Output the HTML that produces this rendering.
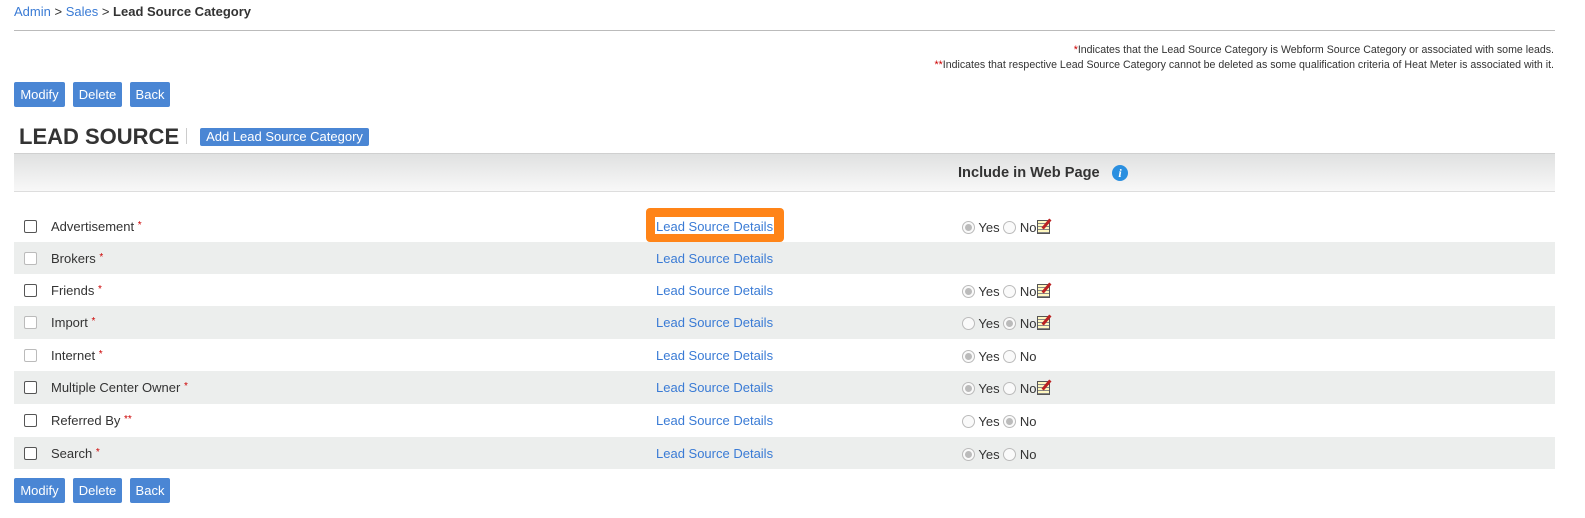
<!DOCTYPE html>
<html><head><style>
body{margin:0;width:1585px;height:518px;background:#fff;font-family:"Liberation Sans",sans-serif;color:#333;position:relative;overflow:hidden}
.a{position:absolute}
.btn{position:absolute;background:#4a86d4;color:#fff;font-size:13px;height:25px;line-height:25px;text-align:center;border-radius:2px}
.row{position:absolute;left:14px;width:1541px}
.g{background:#eceeed}
.cb{position:absolute;left:10px;width:11px;height:11px;border:1px solid #555;border-radius:2px;background:#fff}
.cb.d{border-color:#bbb}
.lbl{position:absolute;left:37px;font-size:13px;color:#333}
.lbl b{color:#c00;font-weight:normal;font-size:10px;vertical-align:3px}
.lk{position:absolute;left:642px;font-size:13px;color:#3a7bd5}
.rad{position:absolute;left:948px;font-size:13px;color:#333;white-space:nowrap}
.r{display:inline-block;width:11px;height:11px;border:1px solid #bbb;border-radius:50%;vertical-align:-2px;position:relative;background:#fafafa}
.r.on::after{content:"";position:absolute;left:2px;top:2px;width:7px;height:7px;border-radius:50%;background:#bbb}
.ed{display:inline-block;width:11px;height:12px;border:1px solid #555;background:#fff8c0;vertical-align:-2px;position:relative;margin-left:1px;background-image:repeating-linear-gradient(#fff8c0 0 2px,#888 2px 3px)}
.ed::after{content:"";position:absolute;left:7px;top:-3px;width:3px;height:12px;background:#b22;transform:rotate(40deg)}
</style></head><body>
<div class="a" style="left:14px;top:4px;font-size:13px"><span style="color:#3a7bd5">Admin</span> &gt; <span style="color:#3a7bd5">Sales</span> &gt; <b>Lead Source Category</b></div>
<div class="a" style="left:14px;top:30px;width:1541px;height:1px;background:#bbb"></div>
<div class="a" style="right:31px;top:43px;font-size:10.6px;text-align:right;line-height:15px"><span style="color:#c00">*</span>Indicates that the Lead Source Category is Webform Source Category or associated with some leads.<br><span style="color:#c00">**</span>Indicates that respective Lead Source Category cannot be deleted as some qualification criteria of Heat Meter is associated with it.</div>
<div class="btn" style="left:14px;top:82px;width:51px">Modify</div>
<div class="btn" style="left:73px;top:82px;width:49px">Delete</div>
<div class="btn" style="left:130px;top:82px;width:40px">Back</div>
<div class="a" style="left:19px;top:124px;font-size:22px;font-weight:bold;color:#333">LEAD SOURCE</div>
<div class="a" style="left:186px;top:128px;width:1px;height:16px;background:#ccc"></div>
<div class="btn" style="left:200px;top:128px;width:169px;height:18px;line-height:18px;font-size:13px">Add Lead Source Category</div>
<div class="a" style="left:14px;top:153px;width:1541px;height:37px;background:linear-gradient(#e0e1e1,#f8f8f8);border-bottom:1px solid #ddd;border-top:1px solid #d0d0d0"></div>
<div class="a" style="left:958px;top:165px;font-size:14.6px;font-weight:bold;color:#333">Include in Web Page</div>
<div class="a" style="left:1112px;top:165px;width:16px;height:16px;border-radius:50%;background:#2a8fe0;color:#fff;font-size:12px;font-weight:bold;font-style:italic;text-align:center;line-height:16px;font-family:'Liberation Serif',serif">i</div>

<div class="row" style="top:210px;height:32px"><div class="cb" style="top:10px"></div><div class="lbl" style="top:9px">Advertisement <b>*</b></div>
<div class="a" style="left:632px;top:-2px;width:138px;height:34px;background:#ff8418;border-radius:4px"></div><div class="a" style="left:641px;top:7px;width:119px;height:17px;background:#fff"></div><div class="lk" style="top:9px">Lead Source Details</div>
<div class="rad" style="top:10px"><span class="r on"></span> Yes <span class="r"></span> No<span class="ed"></span></div></div>
<div class="row g" style="top:242px;height:32px"><div class="cb d" style="top:10px"></div><div class="lbl" style="top:9px">Brokers <b>*</b></div><div class="lk" style="top:9px">Lead Source Details</div></div>
<div class="row" style="top:274px;height:32px"><div class="cb" style="top:10px"></div><div class="lbl" style="top:9px">Friends <b>*</b></div><div class="lk" style="top:9px">Lead Source Details</div><div class="rad" style="top:10px"><span class="r on"></span> Yes <span class="r"></span> No<span class="ed"></span></div></div>
<div class="row g" style="top:306px;height:33px"><div class="cb d" style="top:10px"></div><div class="lbl" style="top:9px">Import <b>*</b></div><div class="lk" style="top:9px">Lead Source Details</div><div class="rad" style="top:10px"><span class="r"></span> Yes <span class="r on"></span> No<span class="ed"></span></div></div>
<div class="row" style="top:339px;height:32px"><div class="cb d" style="top:10px"></div><div class="lbl" style="top:9px">Internet <b>*</b></div><div class="lk" style="top:9px">Lead Source Details</div><div class="rad" style="top:10px"><span class="r on"></span> Yes <span class="r"></span> No</div></div>
<div class="row g" style="top:371px;height:33px"><div class="cb" style="top:10px"></div><div class="lbl" style="top:9px">Multiple Center Owner <b>*</b></div><div class="lk" style="top:9px">Lead Source Details</div><div class="rad" style="top:10px"><span class="r on"></span> Yes <span class="r"></span> No<span class="ed"></span></div></div>
<div class="row" style="top:404px;height:33px"><div class="cb" style="top:10px"></div><div class="lbl" style="top:9px">Referred By <b>**</b></div><div class="lk" style="top:9px">Lead Source Details</div><div class="rad" style="top:10px"><span class="r"></span> Yes <span class="r on"></span> No</div></div>
<div class="row g" style="top:437px;height:32px"><div class="cb" style="top:10px"></div><div class="lbl" style="top:9px">Search <b>*</b></div><div class="lk" style="top:9px">Lead Source Details</div><div class="rad" style="top:10px"><span class="r on"></span> Yes <span class="r"></span> No</div></div>

<div class="btn" style="left:14px;top:478px;width:51px">Modify</div>
<div class="btn" style="left:73px;top:478px;width:49px">Delete</div>
<div class="btn" style="left:130px;top:478px;width:40px">Back</div>
</body></html>
